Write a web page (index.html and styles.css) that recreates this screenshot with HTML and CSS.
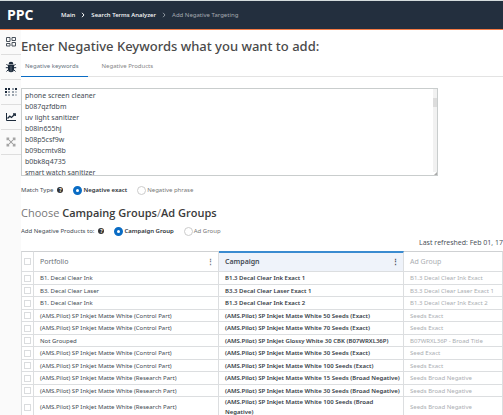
FILE: index.html
```
<!DOCTYPE html>
<html lang="en">
<head>
<meta charset="utf-8">
<title>Add Negative Targeting</title>
<link rel="stylesheet" href="styles.css">
</head>
<body>
<header class="topbar">
  <span class="brand">PPC</span>
  <nav class="crumbs" aria-label="Breadcrumb">
    <a href="#">Main</a>
    <svg class="chevron" viewBox="0 0 4 6"><path d="M1 .8 3 3 1 5.2"/></svg>
    <a href="#">Search Terms Analyzer</a>
    <svg class="chevron dim" viewBox="0 0 4 6"><path d="M1 .8 3 3 1 5.2"/></svg>
    <span class="current">Add Negative Targeting</span>
  </nav>
</header>
<div class="shell">
  <nav class="rail" aria-label="Sections">
    <a href="#" aria-label="Dashboard"><svg viewBox="0 0 12 12" fill="none" stroke="#4a525c"><path d="M1.500 1.500h3.500v4H1.500zM7 1.500h3.500v3H7zM1.500 7.500h3.500v2.500H1.500zM7 6.500h3.500v3.500H7z"/></svg></a>
    <a href="#" aria-label="Bugs"><svg viewBox="0 0 12 12"><path fill="#1d2b3c" d="M3.600 3.200a2.400 2.400 0 0 1 4.800 0zM3 3.800h6v4.400a3 3 0 0 1-6 0z"/><path fill="none" stroke="#1d2b3c" d="M3.200 4.800 1.400 3M8.800 4.800 10.600 3M3.200 6.700H.8M8.800 6.700h2.400M3.400 8.500 1.500 10.500M8.600 8.500l1.900 2"/><path stroke="#8f98a3" stroke-width=".6" d="M6 5v5.500"/></svg></a>
    <a href="#" aria-label="Segments"><svg viewBox="0 0 12 12"><path fill="#1d2b3c" d="M0 2h2v2H0zM3 2h2v2H3zM0 5h2v2H0zM10 2h2v2h-2z"/><path fill="#9aa3ad" d="M3 5h2v2H3zM0 8h2v2H0zM3 8h2v2H3zM7 2h2v2H7zM7 5h2v2H7zM7 8h2v2H7z"/><path fill="#c3c9cf" d="M10 5h2v2h-2zM10 8h2v2h-2z"/></svg></a>
    <a href="#" aria-label="Charts"><svg viewBox="0 0 12 12" fill="none" stroke="#1d2b3c"><path d="M1.500 2v7.500H11"/><path stroke-width="1.300" d="M2.500 7.500 4.800 5.200 6.500 6.500 10 3M8 2.800h2.300V5"/></svg></a>
    <a href="#" aria-label="Network"><svg viewBox="0 0 12 12" fill="none" stroke="#a6a6a6"><path d="M2.500 2.500l7 7M9.500 2.500l-7 7"/><path fill="#a6a6a6" stroke="none" d="M1.500 1.500h2.700v2.700H1.500zM7.800 1.500h2.700v2.700H7.800zM1.500 7.800h2.700v2.700H1.500zM7.800 7.800h2.700v2.700H7.800zM4.800 4.800h2.400v2.400H4.800z"/></svg></a>
  </nav>
  <main class="content">
    <h1>Enter Negative Keywords what you want to add:</h1>
    <div class="tabs">
      <button class="tab active" type="button">Negative keywords</button>
      <button class="tab" type="button">Negative Products</button>
    </div>
    <div class="keywords">
      <textarea aria-label="Negative keywords">phone screen cleaner
b087qzfdbm
uv light sanitizer
b08ln655hj
b08p5csf9w
b09bcmtv8b
b0bk8q4735
smart watch sanitizer</textarea>
      <span class="track"><span class="thumb"></span></span>
      <svg class="grip" viewBox="0 0 4 4"><path d="M0 4 4 0v4z"/></svg>
    </div>
    <div class="options match">
      <span>Match Type</span><span class="help">?</span>
      <label class="on"><input type="radio" name="match" checked>Negative exact</label>
      <label><input type="radio" name="match">Negative phrase</label>
    </div>
    <h2>Choose <b>Campaing Groups</b>/<b>Ad Groups</b></h2>
    <div class="options target">
      <span>Add Negative Products to:</span><span class="help">?</span>
      <label class="on"><input type="radio" name="target" checked>Campaign Group</label>
      <label><input type="radio" name="target">Ad Group</label>
    </div>
    <p class="refreshed">Last refreshed: Feb 01, 17</p>
    <table>
      <colgroup><col class="c-check"><col class="c-wide"><col class="c-wide"><col></colgroup>
      <thead>
        <tr><th><input type="checkbox" aria-label="Select all"></th><th><div class="head">Portfolio<span class="dots">⋮</span></div></th><th class="sorted"><div class="head">Campaign<span class="dots">⋮</span></div></th><th class="muted">Ad Group</th></tr>
      </thead>
      <tbody>
        <tr><td><input type="checkbox" aria-label="Select row"></td><td>B1. Decal Clear Ink</td><td>B1.3 Decal Clear Ink Exact 1</td><td>B1.3 Decal Clear Ink Exact</td></tr>
        <tr><td><input type="checkbox" aria-label="Select row"></td><td>B3. Decal Clear Laser</td><td>B3.3 Decal Clear Laser Exact 1</td><td>B3.3 Decal Clear Laser Exact 1</td></tr>
        <tr><td><input type="checkbox" aria-label="Select row"></td><td>B1. Decal Clear Ink</td><td>B1.3 Decal Clear Ink Exact 2</td><td>B1.3 Decal Clear Ink Exact 2</td></tr>
        <tr><td><input type="checkbox" aria-label="Select row"></td><td>(AMS.Pilot) SP Inkjet Matte White (Control Part)</td><td>(AMS.Pilot) SP Inkjet Matte White 50 Seeds (Exact)</td><td>Seeds Exact</td></tr>
        <tr><td><input type="checkbox" aria-label="Select row"></td><td>(AMS.Pilot) SP Inkjet Matte White (Control Part)</td><td>(AMS.Pilot) SP Inkjet Matte White 70 Seeds (Exact)</td><td>Seeds Exact</td></tr>
        <tr><td><input type="checkbox" aria-label="Select row"></td><td>Not Grouped</td><td>(AMS.Pilot) SP Inkjet Glossy White 30 CBK (B07WRXL36P)</td><td>B07WRXL36P - Broad Title</td></tr>
        <tr><td><input type="checkbox" aria-label="Select row"></td><td>(AMS.Pilot) SP Inkjet Matte White (Control Part)</td><td>(AMS.Pilot) SP Inkjet Matte White 30 Seeds (Exact)</td><td>Seed Exact</td></tr>
        <tr><td><input type="checkbox" aria-label="Select row"></td><td>(AMS.Pilot) SP Inkjet Matte White (Control Part)</td><td>(AMS.Pilot) SP Inkjet Matte White 100 Seeds (Exact)</td><td>Seeds Exact</td></tr>
        <tr><td><input type="checkbox" aria-label="Select row"></td><td>(AMS.Pilot) SP Inkjet Matte White (Research Part)</td><td>(AMS.Pilot) SP Inkjet Matte White 15 Seeds (Broad Negative)</td><td>Seeds Broad Negative</td></tr>
        <tr><td><input type="checkbox" aria-label="Select row"></td><td>(AMS.Pilot) SP Inkjet Matte White (Research Part)</td><td>(AMS.Pilot) SP Inkjet Matte White 30 Seeds (Broad Negative)</td><td>Seeds Broad Negative</td></tr>
        <tr><td><input type="checkbox" aria-label="Select row"></td><td>(AMS.Pilot) SP Inkjet Matte White (Research Part)</td><td>(AMS.Pilot) SP Inkjet Matte White 100 Seeds (Broad<br>Negative)</td><td>Seeds Broad Negative</td></tr>
      </tbody>
    </table>
  </main>
</div>
</body>
</html>
```
FILE: styles.css
```
* { box-sizing: border-box; }
body {
  margin: 0;
  min-height: 100vh;
  display: flex;
  flex-direction: column;
  background: #fff;
  color: #444b53;
  font: 6px/12px "Noto Sans", "Open Sans", sans-serif;
}
button, textarea { font: inherit; color: inherit; }
a { color: inherit; text-decoration: none; }

.topbar {
  display: flex;
  align-items: center;
  height: 30px;
  padding-left: 7px;
  background: #232f3e;
  border-top: 1px solid #d5dcdd;
  border-bottom: 1px solid #f47b45;
  color: #fff;
}
.brand { width: 54px; font-family: "Open Sans", sans-serif; font-size: 14px; font-weight: 700; }
.crumbs { display: flex; align-items: center; gap: 6px; font-weight: 500; white-space: nowrap; }
.chevron { width: 4px; height: 6px; fill: none; stroke: #fff; }
.chevron.dim { stroke: #8d959e; }
.current { color: #a3a9b0; font-weight: 400; }

.shell { flex: 1; display: flex; }
.rail { flex: none; width: 21px; background: #fafafa; }
.rail a {
  display: flex;
  align-items: center;
  justify-content: center;
  height: 25px;
  margin-left: 1px;
  border-bottom: 1px solid #dedede;
}
.rail svg { width: 12px; height: 12px; }
.content { flex: 1; min-width: 0; overflow: hidden; }

h1, h2, p { margin: 0; }
h1 { padding-top: 6px; font-size: 13px; line-height: 20px; font-weight: 500; color: #4a4a4a; white-space: nowrap; }
.tabs { display: flex; gap: 10px; height: 21px; border-bottom: 1px solid #e3e3e3; }
.tab {
  height: 21px;
  padding: 0 9px 0 4px;
  border: 0;
  border-bottom: 1px solid transparent;
  background: none;
  color: #858585;
}
.tab.active { border-bottom-color: #0a6cc4; color: #68747f; }

.keywords { position: relative; margin: 11px 65px 0 0; }
textarea {
  display: block;
  width: 100%;
  height: 88px;
  padding: 1px 3px 0;
  border: 1px solid #c9cdcd;
  resize: none;
  scrollbar-width: none;
  font-size: 7px;
  line-height: 11px;
}
.track { position: absolute; top: 1px; right: 1px; bottom: 4px; width: 4px; background: #f1f1f1; }
.thumb { display: block; height: 9px; margin-top: 9px; background: #dcdcdc; }
.grip { position: absolute; right: 1px; bottom: 1px; width: 3px; height: 3px; fill: #aaa; }

.options { display: flex; align-items: center; height: 12px; white-space: nowrap; }
.match { margin-top: 8px; }
.help {
  width: 6px;
  height: 6px;
  margin: 0 10px 0 4px;
  border-radius: 50%;
  background: #333;
  color: #fff;
  font-size: 5px;
  line-height: 6px;
  font-weight: 700;
  text-align: center;
}
.options label { display: flex; align-items: center; gap: 1px; margin-right: 10px; color: #777; }
.options label.on { color: #2e3338; font-weight: 600; }
input { appearance: none; flex: none; margin: 0; background: #fff; }
input[type=radio] { width: 9px; height: 9px; border: 1px solid #ccc; border-radius: 50%; }
input[type=radio]:checked { border: 3px solid #0a6cc4; }
h2 { margin-top: 7px; font-family: "Open Sans", sans-serif; font-size: 11px; line-height: 20px; font-weight: 400; color: #777; }
h2 b { font-weight: 600; color: #3a3a3a; }
.target { margin-top: 2px; }
.refreshed { padding-top: 1px; font-family: "Open Sans", sans-serif; font-size: 7px; line-height: 10px; text-align: right; white-space: nowrap; }

table {
  width: 100%;
  margin-top: 3px;
  border-collapse: separate;
  border-spacing: 0;
  table-layout: fixed;
  white-space: nowrap;
}
.c-check { width: 13px; }
.c-wide { width: 185px; }
th, td { height: 13px; padding: 0 0 0 6px; border: 0 solid #dcdee0; border-width: 0 1px 1px 0; text-align: left; line-height: 10px; }
tbody tr:nth-child(even) td { height: 12px; }
th:first-child, td:first-child { padding: 0 2px; border-left-width: 1px; }
thead th { height: 21px; padding-right: 4px; border-top: 1px solid #cfd1d3; font-size: 7px; font-weight: 400; color: #6b7178; }
thead th.sorted { border-top: 2px solid #3a8bd0; background: #eff3fa; font-weight: 600; color: #444b55; }
thead th.muted, td:nth-child(4) { color: #aaaeb2; }
td:nth-child(3) { font-weight: 600; color: #353c46; }
.head { display: flex; justify-content: space-between; }
.dots { font-weight: 700; }
input[type=checkbox] { display: block; width: 7px; height: 7px; border: 1px solid #dadcde; }
```
